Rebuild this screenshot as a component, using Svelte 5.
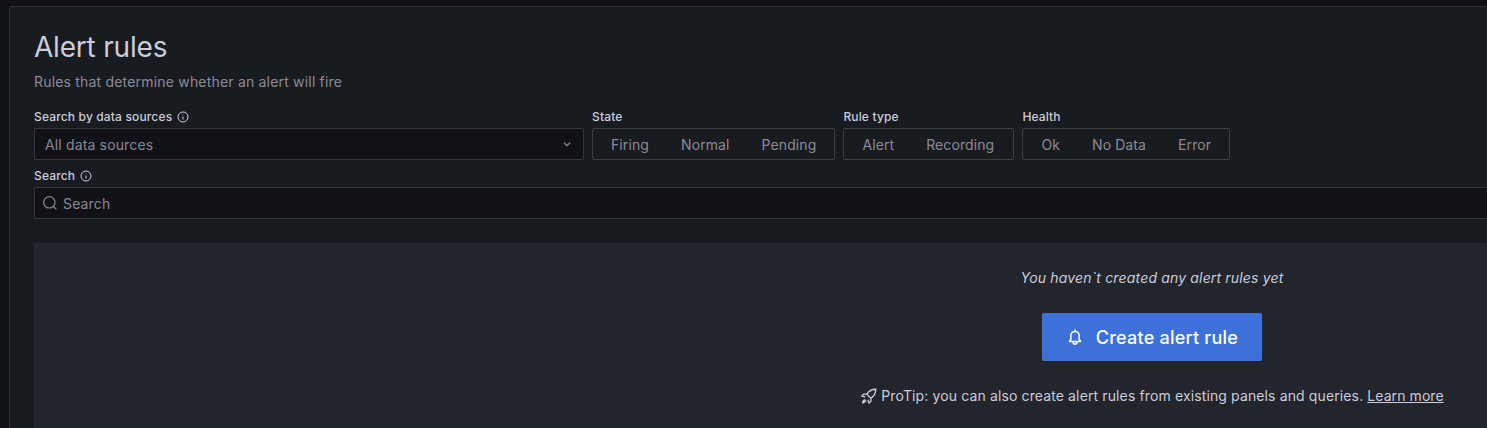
<script>
  const groups = [
    { label: 'State', options: ['Firing', 'Normal', 'Pending'] },
    { label: 'Rule type', options: ['Alert', 'Recording'] },
    { label: 'Health', options: ['Ok', 'No Data', 'Error'] }
  ];
</script>

<div class="page">
  <main class="panel">
    <h1>Alert rules</h1>
    <p class="sub">Rules that determine whether an alert will fire</p>

    <div class="filters">
      <div class="field ds">
        <div class="label">
          <span>Search by data sources</span>
          <svg class="info" viewBox="0 0 24 24" aria-hidden="true"><circle cx="12" cy="12" r="10" /><path d="M12 11v6M12 7v1" /></svg>
        </div>
        <div class="control select">
          <span>All data sources</span>
          <svg class="chev" viewBox="0 0 24 24" aria-hidden="true"><path d="M7.500 10l4.500 4.500 4.500-4.500" /></svg>
        </div>
      </div>
      {#each groups as g}
        <div class="field group">
          <div class="label"><span>{g.label}</span></div>
          <div class="radio">
            {#each g.options as o}<span class="opt">{o}</span>{/each}
          </div>
        </div>
      {/each}
    </div>

    <div class="field search">
      <div class="label">
        <span>Search</span>
        <svg class="info" viewBox="0 0 24 24" aria-hidden="true"><circle cx="12" cy="12" r="10" /><path d="M12 11v6M12 7v1" /></svg>
      </div>
      <div class="control input">
        <svg class="mag" viewBox="0 0 24 24" aria-hidden="true"><circle cx="11" cy="11" r="8.500" /><path d="M17.200 17.200l4.300 4.300" /></svg>
        <span>Search</span>
      </div>
    </div>

    <section class="empty">
      <p class="none">You haven`t created any alert rules yet</p>
      <div class="btn">
        <svg class="bell" viewBox="0 0 24 24" aria-hidden="true"><path d="M12 2.500v1.500M6.500 15V10a5.500 5.500 0 0 1 11 0v5l2 3H4.500l2-3zM9.500 18v1a2.500 2.500 0 0 0 5 0v-1" /></svg>
        <span>Create alert rule</span>
      </div>
      <p class="tip">
        <svg class="rocket" viewBox="0 0 24 24" aria-hidden="true"><path d="M9 9.500C12 5 16 3 21 3c0 5-2 9-6.500 12l-5.500-5.500zM9 9.500H5L2.500 12l4.500 1.500M14.500 15v4L12 21.500l-1.500-4.500M7 17c-1.500 0-3 1.500-3.500 4 2.500-.5 4-2 4-3.500" /></svg>
        <span class="tip-text">ProTip: you can also create alert rules from existing panels and queries.</span>
        <a href="#learn">Learn more</a>
      </p>
    </section>
  </main>
</div>

<style>
  :global(body) {
    margin: 0;
    background: #111217;
    overflow: hidden;
  }
  .page {
    width: 1487px;
    height: 428px;
    overflow: hidden;
    padding: 6px 0 0 9px;
    box-sizing: border-box;
    font-family: Inter, "Noto Sans", sans-serif;
    color: #ccccdc;
  }
  .panel {
    width: 2286px;
    height: 500px;
    box-sizing: border-box;
    background: #181b1f;
    border: 1px solid rgba(204, 204, 220, 0.12);
    border-radius: 2px;
    padding: 24px 24px 0;
  }
  h1 {
    margin: 0;
    font-size: 28px;
    font-weight: 400;
    line-height: 33px;
    letter-spacing: -0.2px;
    color: #ccccdc;
  }
  .sub {
    margin: 7px 0 0;
    font-size: 14px;
    line-height: 21px;
    letter-spacing: 0.19px;
    color: rgba(204, 204, 220, 0.65);
  }
  .filters {
    display: flex;
    gap: 8px;
    margin-top: 15px;
  }
  .field {
    display: flex;
    flex-direction: column;
  }
  .label {
    display: flex;
    align-items: center;
    gap: 5px;
    height: 21px;
    padding-bottom: 2px;
    box-sizing: border-box;
    font-size: 12px;
    font-weight: 500;
    letter-spacing: 0.15px;
    color: #ccccdc;
  }
  .info {
    width: 12px;
    height: 12px;
    fill: none;
    stroke: #ccccdc;
    stroke-width: 2;
  }
  .control {
    height: 32px;
    box-sizing: border-box;
    background: #111217;
    border: 1px solid rgba(204, 204, 220, 0.2);
    border-radius: 2px;
    display: flex;
    align-items: center;
    font-size: 14px;
    letter-spacing: 0.15px;
    color: rgba(204, 204, 220, 0.65);
  }
  .ds {
    width: 550px;
  }
  .select {
    justify-content: space-between;
    padding: 0 8px 0 10px;
  }
  .chev {
    width: 16px;
    height: 16px;
    fill: none;
    stroke: rgba(204, 204, 220, 0.65);
    stroke-width: 2;
  }
  .group:nth-child(3) {
    min-width: 171px;
  }
  .radio {
    height: 32px;
    box-sizing: border-box;
    display: flex;
    align-items: center;
    gap: 16px;
    padding: 0 2px;
    border: 1px solid rgba(204, 204, 220, 0.2);
    border-radius: 2px;
    font-size: 14px;
    letter-spacing: 0.1px;
    color: rgba(204, 204, 220, 0.65);
  }
  .opt {
    padding: 0 16px;
    margin-right: -16px;
  }
  .opt:last-child {
    margin-right: 0;
  }
  .search {
    margin-top: 6px;
  }
  .input {
    gap: 5px;
    padding: 0 7px;
  }
  .mag {
    width: 16px;
    height: 16px;
    fill: none;
    stroke: rgba(204, 204, 220, 0.65);
    stroke-width: 1.800;
  }
  .empty {
    margin-top: 24px;
    height: 300px;
    background: #22252b;
    display: flex;
    flex-direction: column;
    align-items: center;
    padding-top: 24px;
    box-sizing: border-box;
  }
  .none {
    margin: 0;
    font-size: 14px;
    line-height: 21px;
    font-style: italic;
    letter-spacing: 0.16px;
    color: #ccccdc;
  }
  .btn {
    margin-top: 25px;
    width: 220px;
    height: 48px;
    border-radius: 2px;
    background: #3d71d9;
    display: flex;
    align-items: center;
    justify-content: center;
    gap: 12px;
    color: #fff;
    font-size: 18px;
    font-weight: 500;
    letter-spacing: 0.22px;
  }
  .bell {
    width: 18px;
    height: 18px;
    fill: none;
    stroke: #fff;
    stroke-width: 2;
    stroke-linecap: round;
    stroke-linejoin: round;
  }
  .tip {
    margin: 24px 0 0;
    display: flex;
    align-items: center;
    gap: 4px;
    font-size: 14px;
    line-height: 21px;
    letter-spacing: 0.125px;
    color: #ccccdc;
  }
  .tip-text {
    margin-left: -1px;
  }
  .rocket {
    width: 18px;
    height: 18px;
    fill: none;
    stroke: #ccccdc;
    stroke-width: 1.800;
  }
  a {
    color: #ccccdc;
    text-decoration: underline;
    letter-spacing: 0.08px;
  }
</style>
